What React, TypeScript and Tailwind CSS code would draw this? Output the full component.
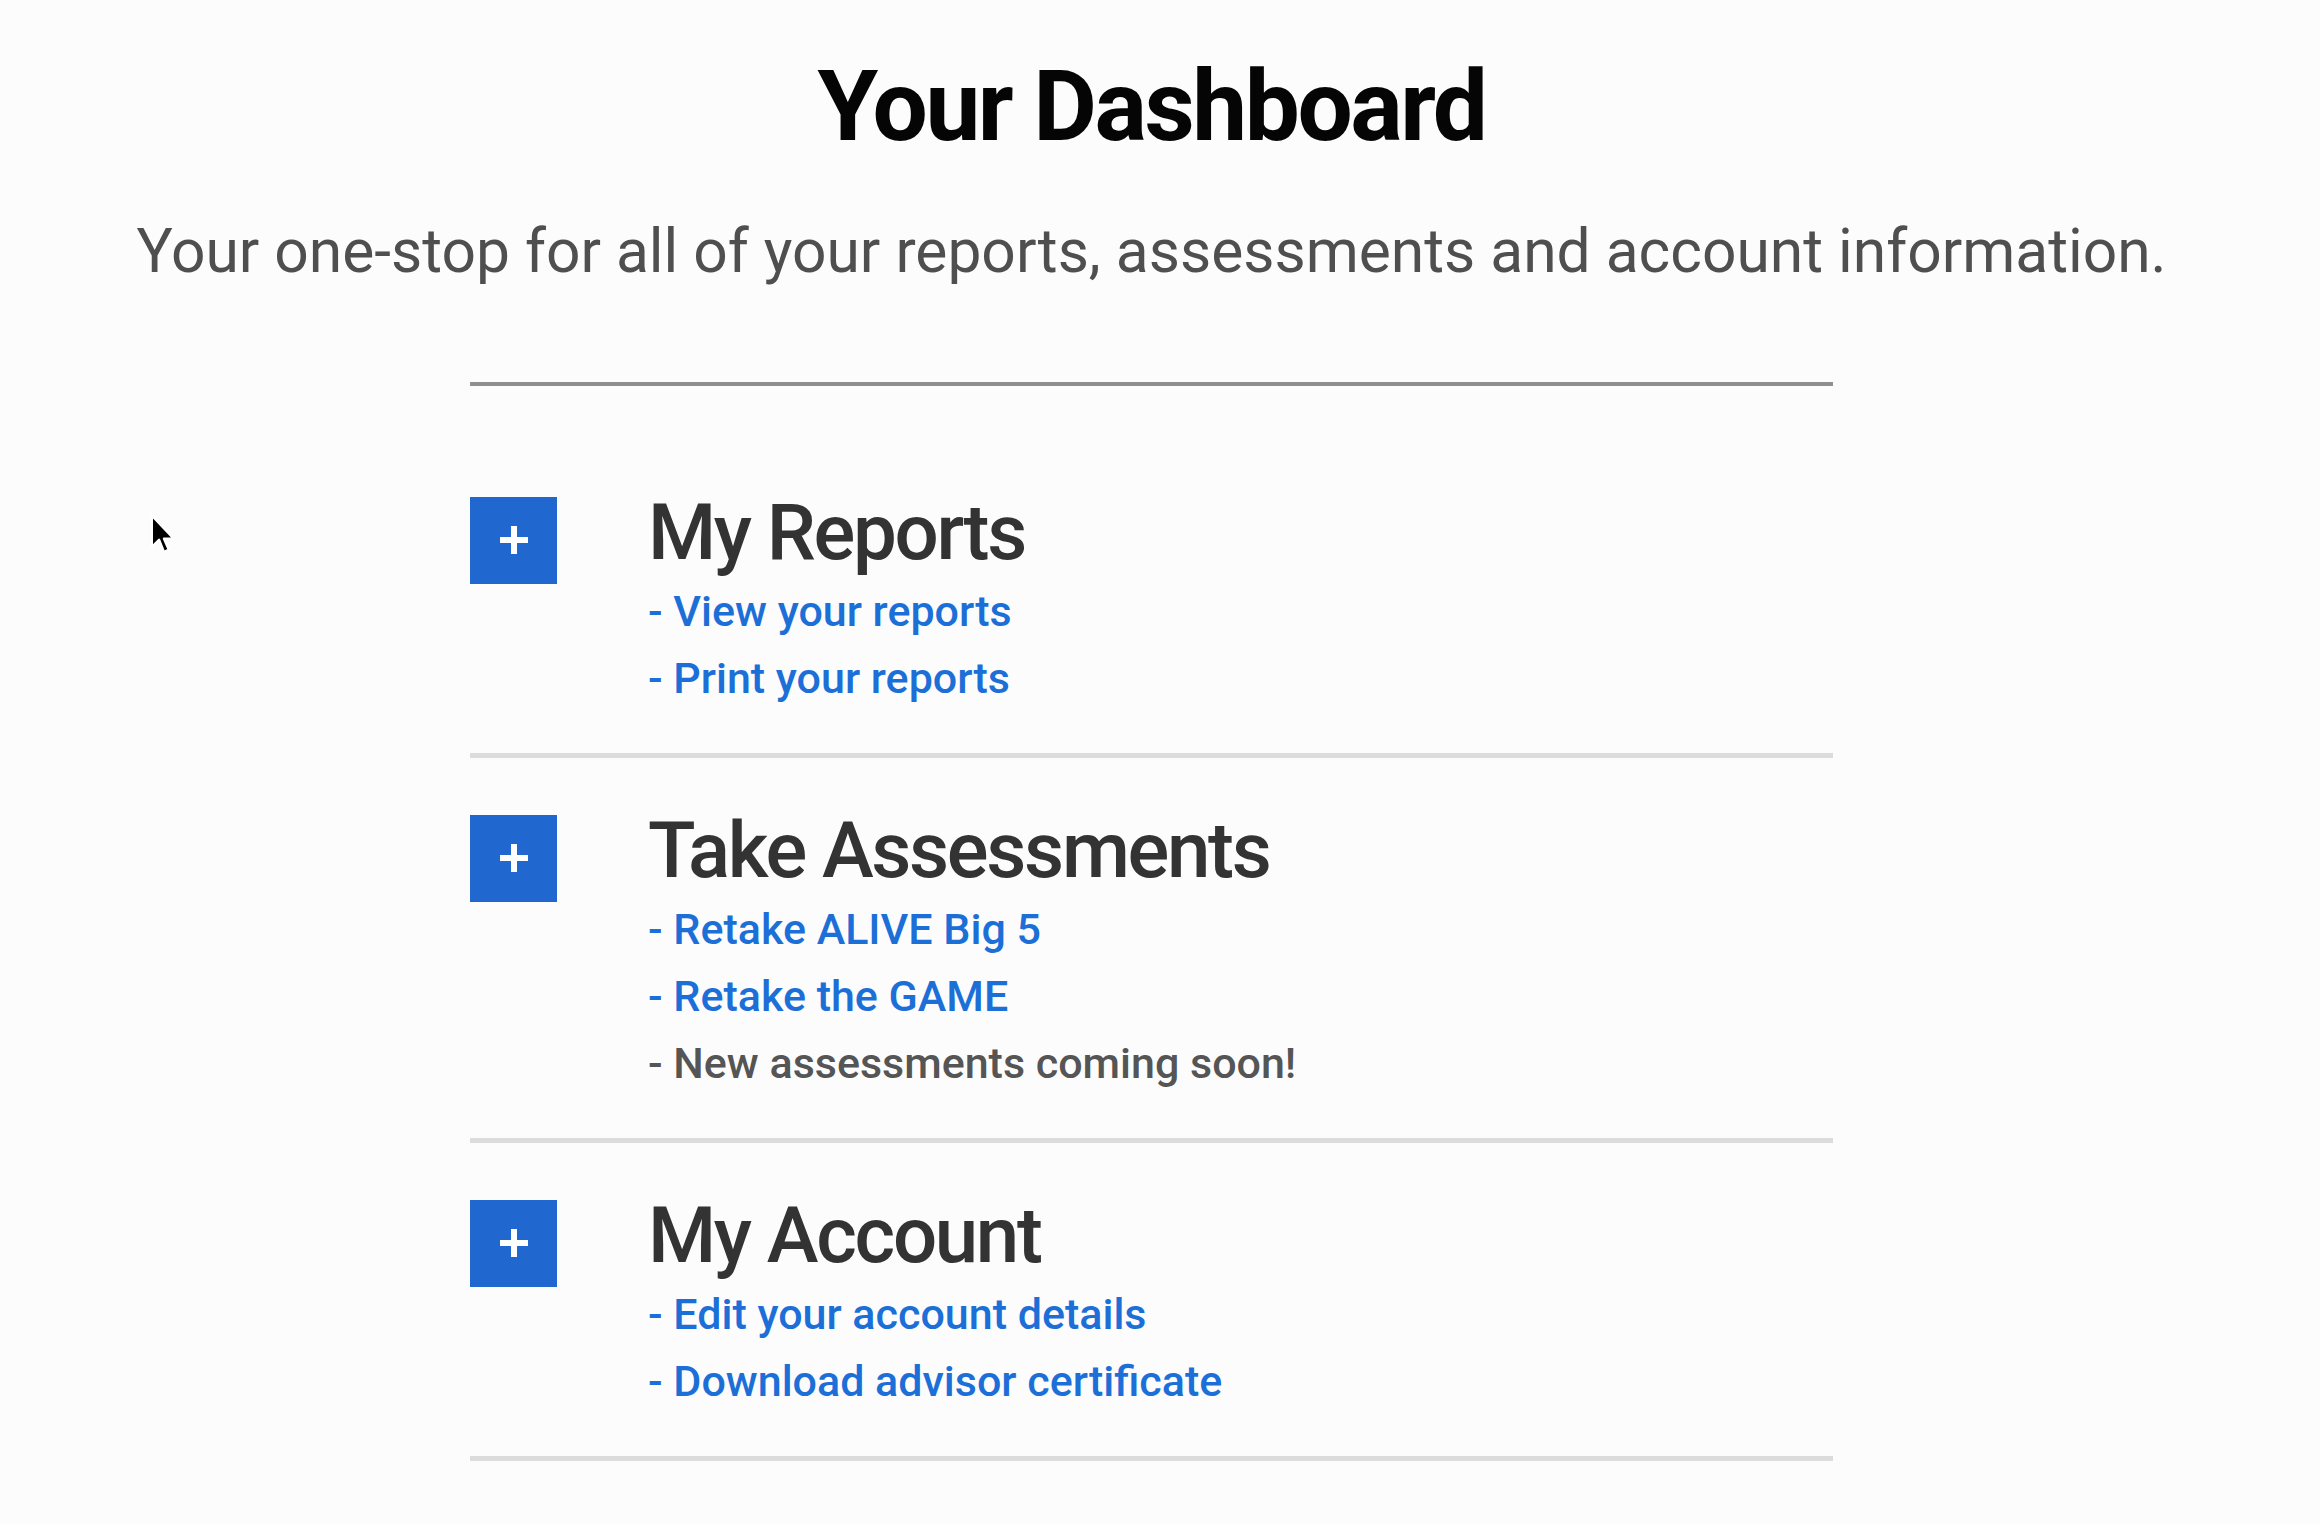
import React from 'react';

// One block on the dashboard: a toggle square, a heading and its list of links
interface DashSection {
  title: string;
  links: { label: string; active: boolean }[];
}

const sections: DashSection[] = [
  {
    title: 'My Reports',
    links: [
      { label: 'View your reports', active: true },
      { label: 'Print your reports', active: true },
    ],
  },
  {
    title: 'Take Assessments',
    links: [
      { label: 'Retake ALIVE Big 5', active: true },
      { label: 'Retake the GAME', active: true },
      { label: 'New assessments coming soon!', active: false },
    ],
  },
  {
    title: 'My Account',
    links: [
      { label: 'Edit your account details', active: true },
      { label: 'Download advisor certificate', active: true },
    ],
  },
];

const PlusBox = () => (
  <button className="flex h-[87px] w-[87px] shrink-0 items-center justify-center bg-[#2068cf]">
    <svg width="32" height="32" viewBox="0 0 32 32">
      <rect x="13" y="2" width="6" height="28" fill="#fff" />
      <rect x="2" y="13" width="28" height="6" fill="#fff" />
    </svg>
  </button>
);

const Section = ({ section, first }: { section: DashSection; first: boolean }) => (
  <div
    className={`flex border-b-[5px] border-[#dcdcdd] ${first ? 'pt-[111px]' : 'pt-[57px]'} pb-[41px]`}
  >
    <PlusBox />
    <div className="-mt-[3px] ml-[91px]">
      <h2 className="text-[78px] font-medium leading-none tracking-[-0.03em] text-[#333]">
        {section.title}
      </h2>
      <ul className="mt-[6px]">
        {section.links.map(link => (
          <li
            key={link.label}
            className={`text-[43px] font-medium leading-[67px] ${
              link.active ? 'text-[#1d6fd8]' : 'text-[#555]'
            }`}
          >
            - {link.label}
          </li>
        ))}
      </ul>
    </div>
  </div>
);

// Mouse pointer left on the page
const Cursor = () => (
  <svg className="absolute left-[149px] top-[513px]" width="30" height="44" viewBox="0 0 24 36">
    <path
      d="M2 2 L2 28 L8 22 L12 32 L16 30 L12 21 L20 21 Z"
      fill="#000"
      stroke="#fff"
      strokeWidth="2"
      strokeLinejoin="round"
    />
  </svg>
);

export default function App() {
  return (
    <div
      className="relative min-h-screen bg-[#fcfcfd] pr-[17px]"
      style={{ fontFamily: 'Roboto, "Noto Sans", sans-serif' }}
    >
      <Cursor />
      <header className="pt-[58px] text-center">
        <h1 className="text-[98px] font-bold leading-none tracking-tight text-[#050505]">
          Your Dashboard
        </h1>
        <p className="mt-[66px] text-[60.5px] leading-none text-[#4f4f4f]">
          Your one-stop for all of your reports, assessments and account information.
        </p>
      </header>
      <main className="mx-auto mt-[99px] w-[1363px] border-t-[4px] border-[#8f8f8f]">
        {sections.map((s, i) => (
          <Section key={s.title} section={s} first={i === 0} />
        ))}
      </main>
    </div>
  );
}
